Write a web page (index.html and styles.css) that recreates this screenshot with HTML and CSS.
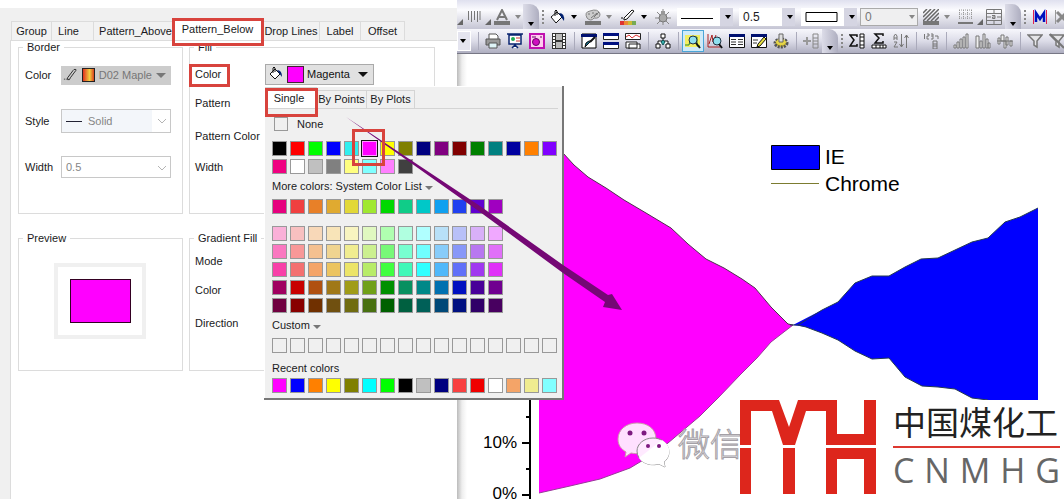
FILE: index.html
```html
<!DOCTYPE html>
<html lang="en">
<head>
<meta charset="utf-8">
<title>Plot Details</title>
<link rel="stylesheet" href="styles.css">
</head>
<body>
<div class="shell">
  <section class="dialog">
    <nav class="tabs">
      <button class="tab tab-group">Group</button>
      <button class="tab tab-line">Line</button>
      <button class="tab tab-above">Pattern_Above</button>
      <button class="tab tab-below active">Pattern_Below</button>
      <button class="tab tab-drop">Drop Lines</button>
      <button class="tab tab-label">Label</button>
      <button class="tab tab-offset">Offset</button>
    </nav>
    <div class="page">
      <fieldset class="group upper">
        <legend>Border</legend>
        <div class="fields">
          <label for="bcolor">Color</label>
          <button id="bcolor" class="color-btn" disabled>
            <svg width="16" height="16" viewBox="0 0 16 16"><path d="M1 12.500h1M3 12.500h1M5 11l6-8M8 11l6-8M11 3l1-1h2v1M5 11v2h2l1-2" fill="none" stroke="#222"/></svg>
            <span class="maple"></span><span>D02 Maple</span><i class="arrow"></i>
          </button>
          <label for="bstyle">Style</label>
          <span class="combo tall">
            <select id="bstyle" disabled><option>Solid</option></select>
            <i class="dash"></i>
            <svg class="chev" width="10" height="6" viewBox="0 0 10 6"><path d="M1 1l4 4 4-4" fill="none" stroke="#b4b4b4"/></svg>
          </span>
          <label for="bwidth">Width</label>
          <span class="combo">
            <select id="bwidth" disabled><option>0.5</option></select>
            <svg class="chev" width="10" height="6" viewBox="0 0 10 6"><path d="M1 1l4 4 4-4" fill="none" stroke="#b4b4b4"/></svg>
          </span>
        </div>
      </fieldset>
      <fieldset class="group upper">
        <legend>Fill</legend>
        <div class="fill-fields">
          <label for="fcolor">Color</label>
          <div class="picker">
            <button id="fcolor" class="fill-btn">
              <svg width="16" height="16" viewBox="0 0 16 16"><path d="M2 8l5-5 5 5-5 5z" fill="#fff" stroke="#111"/><path d="M5 7V2q1-2 2 0v4" fill="none" stroke="#111"/><path d="M9 4q5 0 5 7l-3-4z" fill="#002070"/></svg>
              <span class="chip"></span><span>Magenta</span><i class="arrow"></i>
            </button>
            <div class="popup">
              <div class="ptabs">
                <button class="ptab on">Single</button>
                <button class="ptab points">By Points</button>
                <button class="ptab">By Plots</button>
              </div>
              <div class="pbody">
                <label class="none"><input type="checkbox">None</label>
                <div class="swatches" data-set="basic"></div>
                <button class="heading">More colors: System Color List <i class="arrow small"></i></button>
                <div class="swatches" data-set="system"></div>
                <div class="swatches shades" data-set="shades"></div>
                <button class="heading custom">Custom <i class="arrow small"></i></button>
                <div class="swatches" data-set="custom"></div>
                <p class="recent">Recent colors</p>
                <div class="swatches" data-set="recent"></div>
              </div>
            </div>
          </div>
          <span>Pattern</span>
          <span class="wide">Pattern Color</span>
          <span>Width</span>
        </div>
      </fieldset>
      <fieldset class="group lower">
        <legend>Preview</legend>
        <div class="preview"><div class="sample"></div></div>
      </fieldset>
      <fieldset class="group lower">
        <legend>Gradient Fill</legend>
        <div class="grad-fields"><span>Mode</span><span>Color</span><span>Direction</span></div>
      </fieldset>
    </div>
  </section>

  <main class="workspace">
    <div class="toolbar first">
      <i class="corner"></i>
      <button class="tool" aria-label="Line spacing"><svg viewBox="0 0 16 16"><path d="M2.500 2v9M5.500 2v11M8.500 2v9M11.500 2v11M14 2v9" stroke="#777" fill="none"/></svg></button>
      <i class="corner"></i>
      <button class="tool" aria-label="Font color"><svg viewBox="0 0 16 16"><path d="M3 11L8 1l5 10M5 8h6" stroke="#777" stroke-width="2" fill="none"/><path d="M0 12h16v4H0z" fill="#777"/></svg></button>
      <i class="drop dim"></i><i class="cap"></i><i class="grip"></i>
      <span class="split"><button class="tool" aria-label="Fill color"><svg viewBox="0 0 16 16"><path d="M1 8l6-5 5 5-6 6z" fill="#fff" stroke="#111"/><path d="M5 7V2q1-2 2 0v4" fill="none" stroke="#111"/><path d="M9 4q6 0 5 8l-3-4z" fill="#002070"/></svg></button><i class="drop"></i></span>
      <span class="split"><button class="tool" aria-label="Palette"><svg viewBox="0 0 16 16"><path d="M2 9Q-1 3 5 2q8-3 10 3 0 5-6 4-3 4-7 0z" fill="#ccc" stroke="#888"/><path d="M3 5h2M7 4h2M11 5h2M6 9l6-5M9 8l5-5" stroke="#777"/><path d="M0 12h16v4H0z" fill="#777"/></svg></button><i class="drop dim"></i></span>
      <span class="split"><button class="tool" aria-label="Line color"><svg viewBox="0 0 16 16"><path d="M1 9h2M4 9l8-8 2 1-7 8-3 1z" stroke="#111" fill="#fff"/><path d="M0 12h4v4H0z" fill="#d33"/><path d="M4 12h4v4H4z" fill="#e83"/><path d="M8 12h4v4H8z" fill="#cb3"/><path d="M12 12h4v4h-4z" fill="#7a5"/></svg></button><i class="drop"></i></span>
      <button class="tool" aria-label="Highlight"><svg viewBox="0 0 16 16"><path d="M8 0v16M0 9h16M2 3l12 12M14 3L2 15" stroke="#888"/><circle cx="8" cy="9" r="4" fill="#aaa" stroke="#777"/><path d="M6 2h4v4H6z" fill="#999"/></svg></button>
      <button class="tselect" aria-label="Line style"><svg width="34" height="14"><path d="M0 8.500h32" stroke="#000"/></svg><i class="drop"></i></button>
      <button class="tselect"><span>0.5</span><i class="drop"></i></button>
      <button class="tselect" aria-label="Frame style"><svg width="34" height="14"><path d="M1 2.500h31v9H1z" stroke="#000" fill="#fff"/></svg><i class="drop"></i></button>
      <button class="tselect off" disabled><span>0</span><i class="drop dim"></i></button>
      <span class="split"><button class="tool" aria-label="Hatch"><svg viewBox="0 0 16 16"><path d="M0 4l4-4M0 8l8-8M0 12L12 0M4 12L16 0M8 12l8-8M12 12l4-4" stroke="#666" stroke-width="1.500"/><path d="M0 12h16v4H0z" fill="#777"/></svg></button><i class="drop dim"></i></span>
      <button class="tool" aria-label="Grid"><svg viewBox="0 0 16 16"><path d="M1 1h13M1 5h13M1 9h13M1.500 1v10M5.500 1v10M9.500 1v10M13.500 1v10" stroke="#999" stroke-dasharray="1 1"/><path d="M0 14h15" stroke="#777" stroke-width="2"/></svg></button><i class="corner"></i>
      <button class="tool" aria-label="Merge cells"><svg viewBox="0 0 16 16"><path d="M.5.5h15v15H.5zM0 4.500h16M0 11.500h16M8 0v4M8 12v4M1 8h4M11 8h4M6 6.500h3v3H6.500V8H9" stroke="#777" fill="none"/></svg></button>
      <i class="cap"></i><i class="grip"></i>
      <button class="tool" aria-label="Mask"><svg viewBox="0 0 16 16"><path d="M1.500 1v14M14.500 1v14" stroke="#e02050"/><path d="M4 13V4l4 6 4-6v9" fill="none" stroke="#0010c0" stroke-width="2.500"/></svg></button>
      <button class="tool" aria-label="Unmask"><svg viewBox="0 0 16 16"><path d="M1.500 1v14" stroke="#999"/><path d="M3 3l10 10M13 3L3 13" stroke="#888" stroke-width="3"/></svg></button>
    </div>
    <div class="toolbar second">
      <button class="mini" aria-label="Choose"><i class="drop"></i></button>
      <i class="sep"></i>
      <button class="tool" aria-label="Print"><svg viewBox="0 0 16 16"><path d="M4 7V1h7l2 2v4" fill="#fff" stroke="#555"/><path d="M1 6h14v6H1z" fill="#999" stroke="#555"/><path d="M4 10h8v5H4z" fill="#dff5f8" stroke="#555"/></svg></button>
      <button class="tool" aria-label="Slides"><svg viewBox="0 0 16 16"><path d="M0 1h16M2 2h12v9H2zM8 11v2M5 15l3-3 3 3" fill="#fff" stroke="#0a2470" stroke-width="1.500"/><circle cx="6" cy="6" r="2" fill="#2a5"/><path d="M9 5h4M9 8h4" stroke="#c33"/></svg></button>
      <button class="tool" aria-label="Capture"><svg viewBox="0 0 16 16"><path d="M1 1h14v14H1z" fill="#fce" stroke="#c010b0" stroke-width="2"/><circle cx="7" cy="9" r="3.500" fill="#d010c0" stroke="#606"/><path d="M11 4h2M3 4h4" stroke="#606"/></svg></button>
      <button class="tool" aria-label="Film"><svg viewBox="0 0 16 16"><path d="M1 0h14v16H1z" fill="#333"/><path d="M5 1h6v6H5zM5 9h6v6H5z" fill="#bbb"/><path d="M3 1v14M13 1v14" stroke="#fff" stroke-width="2" stroke-dasharray="2 1"/></svg></button>
      <i class="sep"></i>
      <button class="tool" aria-label="Edit"><svg viewBox="0 0 16 16"><path d="M1 1h14v14H1z" fill="#fff" stroke="#000"/><path d="M0 1h16v3H0z" fill="#001070"/><path d="M14 4L9 9" stroke="#111" stroke-width="2"/><path d="M10 8l-6 6q0-5 4-6z" fill="#176f8a" stroke="#111"/></svg></button>
      <button class="tool" aria-label="Tile"><svg viewBox="0 0 16 16"><path d="M.5.5h15v6H.5zM.5 9.500h15v6H.5z" fill="#fff" stroke="#222"/><path d="M0 0h16v3H0zM0 9h16v3H0z" fill="#001080"/></svg></button>
      <button class="tool" aria-label="Stack"><svg viewBox="0 0 16 16"><path d="M.5.5h15v6H.5zM1 9h11v6H1zM4 11h11v5H4z" fill="#fff" stroke="#222"/><path d="M1 4l3-2 3 3 4-3 4 2" fill="none" stroke="#d33"/></svg></button>
      <i class="sep"></i>
      <button class="tool" aria-label="Hierarchy"><svg viewBox="0 0 16 16"><path d="M6 1h4v4H6zM1 11h4v4H1zM11 11h4v4h-4zM8 5v3M3 11V8h10v3" fill="#fff" stroke="#111"/><path d="M6 9l2-2 2 2-2 3z" fill="#3aa" stroke="#155"/></svg></button>
      <i class="sep"></i>
      <button class="tool chosen" aria-label="Zoom region"><svg viewBox="0 0 16 16"><path d="M0 2h15v12H0z" fill="#f3ee60"/><path d="M0 12h4l2-8h6v9h3" fill="none" stroke="#2a8a30"/><circle cx="8" cy="7" r="4" fill="#8fe0ee" stroke="#234"/><path d="M11 10l4 5" stroke="#111" stroke-width="2"/></svg></button>
      <button class="tool" aria-label="Zoom plot"><svg viewBox="0 0 16 16"><path d="M1 1v13h12M2 11l3-9 1 7 3-7" fill="none" stroke="#a22"/><circle cx="10" cy="8" r="4" fill="#8fe0ee" stroke="#234"/><path d="M12 11l3 4" stroke="#111" stroke-width="2"/></svg></button>
      <button class="tool" aria-label="Table"><svg viewBox="0 0 16 16"><path d="M.5 1.500h15v13H.5z" fill="#fff" stroke="#111"/><path d="M0 1h16v3H0z" fill="#001070"/><path d="M2 6.500h5M9 6.500h5M2 9h5M9 9h5M2 11.500h5M9 11.500h5" stroke="#333"/></svg></button>
      <button class="tool" aria-label="Notes"><svg viewBox="0 0 16 16"><path d="M.5 1.500h15v13H.5z" fill="#fff" stroke="#111"/><path d="M0 1h16v3H0z" fill="#001070"/><path d="M2 7h5M2 10h4" stroke="#333"/><path d="M13 4l2 2-6 7-3 1 1-3z" fill="#e8e040" stroke="#111"/></svg></button>
      <button class="tool" aria-label="Settings"><svg viewBox="0 0 16 16"><ellipse cx="8" cy="10" rx="6" ry="4" fill="#d8c430" stroke="#555" stroke-width="3" stroke-dasharray="2 1"/><ellipse cx="8" cy="9" rx="5" ry="3" fill="#e5d548"/><path d="M6 1h4v8H6z" fill="#ddd" stroke="#666"/></svg></button>
      <i class="sep"></i>
      <button class="tool" aria-label="Add column"><svg viewBox="0 0 16 16"><path d="M0 8h8M4 4v8" stroke="#999" stroke-width="2"/><path d="M10 1h5v14h-5zM10 5h5M10 8h5M10 11h5" fill="none" stroke="#888"/></svg></button>
      <i class="cap"></i><i class="grip"></i>
      <button class="tool" aria-label="Column statistics"><svg viewBox="0 0 16 16"><path d="M8 4V2H1l4 5-4 6h7v-2" fill="none" stroke="#111" stroke-width="1.500"/><path d="M11 1h4v14h-4zM11 4h4M11 8h4M11 12h4" fill="#fff" stroke="#111"/></svg></button>
      <button class="tool" aria-label="Row statistics"><svg viewBox="0 0 16 16"><path d="M12 3V1H4l4 4-4 5h8V8" fill="none" stroke="#111" stroke-width="1.500"/><path d="M1 12h14v3H1zM5 12v3M9 12v3M12 12v3" fill="#fff" stroke="#111"/></svg></button>
      <button class="tool" aria-label="Sort"><svg viewBox="0 0 16 16"><path d="M1 7V3l1.500-2L4 3v4M1 5h3M1 9h3l-3 5h4M8.500 1v13M6.500 11l2 3 2-3M13.500 15V2M11.500 5l2-3 2 3" fill="none" stroke="#777"/></svg></button>
      <i class="sep"></i>
      <button class="tool" aria-label="Row numbers"><svg viewBox="0 0 16 16"><path d="M1.500 1v5M4 1h2v2H4v3h2M8 1h2v5H8M8 3h2M12 3h3v3M10 8h4v8h-4zM10 11h4M10 13h4" fill="none" stroke="#777"/></svg></button>
      <i class="sep"></i>
      <button class="tool" aria-label="Ascending bars"><svg viewBox="0 0 16 16"><path d="M1 12h2v3H1zM4 9h2v6H4zM7 6h2v9H7zM10 4h2v11h-2zM13 1h2v14h-2z" fill="#eee" stroke="#777"/></svg></button>
      <button class="tool" aria-label="Bars"><svg viewBox="0 0 16 16"><path d="M1 3h3v12H1zM5 8h2v7H5zM8 1h2v14H8zM11 6h2v9h-2zM13 10h2v5h-2z" fill="#eee" stroke="#777"/></svg></button>
      <button class="tool" aria-label="Centered bars"><svg viewBox="0 0 16 16"><path d="M0 8h16M1 5h2v6H1zM4 2h3v6H4zM7 8h2v7H7zM9 4h2v8H9zM13 8h2v5h-2z" fill="#eee" stroke="#777"/></svg></button>
      <i class="sep"></i>
      <button class="tool" aria-label="Filter"><svg viewBox="0 0 16 16"><path d="M1 2h14L10 8v6l-3-2V8z" fill="#e5e5e8" stroke="#777" stroke-width="1.500"/></svg></button>
      <button class="tool" aria-label="Clear filter"><svg viewBox="0 0 16 16"><path d="M1 2h14L10 8v6l-3-2V8z" fill="#e5e5e8" stroke="#777" stroke-width="1.500"/><path d="M1 1l14 14" stroke="#777" stroke-width="2"/></svg></button>
    </div>
    <div class="plot">
      <svg class="chart" viewBox="457 54 607 445" preserveAspectRatio="xMinYMin meet" role="img" aria-label="Browser share area chart">
        <path d="M539 130L563 153 574 165 588 177 606 188 624 200 646 213 671 228 688 244 706 259 724 268 742 279 755 288 771 307 788 324 793 325 780 335 771 342 757 358 740 375 718 398 700 416 668 443 650 456 630 468 600 479 570 486 539 493z" fill="#f0f"/>
        <path d="M539 130L563 153 574 165 588 177 606 188 624 200 646 213 671 228 688 244 706 259 724 268 742 279 755 288 771 307 788 324 793 325" fill="none" stroke="#503050"/>
        <path d="M793 325L780 335 771 342 757 358 740 375 718 398 700 416 668 443 650 456 630 468 600 479 570 486 539 493" fill="none" stroke="#99389a"/>
        <path d="M793 325L822 310 838 302 855 283 872 276 889 276 905 267 921 259 938 258 972 242 988 238 1005 222 1020 217 1038 208V400H988L972 398 955 389 938 387 922 386 905 377 889 358 872 359 855 351 838 340 822 333 806 327z" fill="#00f"/>
        <path d="M790 325L798 325 822 310 838 302 855 283 872 276 889 276 905 267 921 259 938 258 972 242 988 238 1005 222 1020 217 1038 208M798 325L806 327 822 333 838 340 855 351 872 359 889 358 905 377 922 386 938 387 955 389 972 398 988 400" fill="none" stroke="#223a50"/>
        <path d="M530 87V499M522 443h8M522 495h8M526 417h4M526 469h4" fill="none" stroke="#000" stroke-width="2"/>
        <text class="tick" x="517" y="448" text-anchor="end">10%</text>
        <text class="tick" x="517" y="499" text-anchor="end">0%</text>
        <path d="M771.500 145.500h48v24h-48z" fill="#00f" stroke="#000"/>
        <path d="M771 183.500h48" stroke="#7c7c30"/>
        <text class="key" x="825" y="164">IE</text>
        <text class="key" x="825" y="191">Chrome</text>
        <path d="M637 423c-11 0-19 7-19 16 0 6 3 10 8 13l-1 5 6-4c13 3 25-4 25-14s-8-16-19-16z" fill="#ffe0ff" stroke="#c9a"/>
        <path d="M653 438c-9 0-16 6-16 13 0 10 11 16 22 13l6 3-1-5c10-8 4-24-11-24z" fill="#ffeaff" stroke="#888"/>
        <path d="M662 440c10 6 9 16 2 22l1 5-6-3c-8 2-16 0-20-6z" fill="#fff"/>
        <g fill="#7d1a80"><circle cx="630" cy="433" r="2.500"/><circle cx="644" cy="433" r="2.500"/><circle cx="648" cy="446" r="2"/><circle cx="659" cy="446" r="2"/></g>
        <text class="wechat" x="678" y="456">微信</text>
      </svg>
      <div class="brand">
        <svg width="136" height="94" viewBox="0 0 136 94" fill="#dd261c"><path d="M0 0H39L49 27 58 0H97V34H124V0H136V45H86V11H66L55 45H43L32 11H11V45H0zM0 48H11V94H0zM43 48H55V94H43zM86 48H136V94H124V59H97V94H86z"/></svg>
        <div class="words">
          <div class="cn" lang="zh">中国煤化工</div>
          <div class="en"><span>C</span><span>N</span><span>M</span><span>H</span><span>G</span></div>
        </div>
      </div>
    </div>
  </main>
  <svg class="marks" width="640" height="330" viewBox="0 0 640 330" aria-hidden="true">
    <path d="M346 117L480 206 563 265 608 295 612 294 622 310 603 307 605 302 563 273 480 212z" fill="#750875"/>
    <g fill="none" stroke="#d8433d" stroke-width="3"><path d="M173.500 19.500h89v25h-89zM190.500 65.500h38v20h-38zM266.500 89.500h50v26h-50zM353.500 130.500h30v34h-30z"/></g>
  </svg>
</div>
<script src="app.js"></script>
</body>
</html>
```
FILE: styles.css
```css
* { box-sizing: border-box; }
body { margin: 0; background: #fff; color: #1a1a22; font: 11px/14px "Liberation Sans", Arial, sans-serif; }
button, select, input { font: inherit; color: inherit; margin: 0; }
button { border: 0; padding: 0; background: none; white-space: nowrap; }
.shell { position: relative; display: grid; grid-template-columns: 457px minmax(0, 1fr); min-height: 100vh; overflow: hidden; }
.marks { position: absolute; left: 0; top: 0; z-index: 5; pointer-events: none; }

.dialog { display: flex; flex-direction: column; border-top: 8px solid #fff; background: #f0f0f0; }
.tabs { display: flex; align-items: flex-end; height: 32px; padding-left: 11px; }
.tab { height: 19px; border: solid #dcdcdc; border-width: 1px 1px 0 0; background: #f2f2f2; }
.tab-group { width: 41px; border-left-width: 1px; }
.tab-line { width: 42px; padding-right: 8px; }
.tab-above { width: 79px; padding-left: 5px; }
.tab-below { width: 90px; height: 22px; padding-bottom: 2px; background: #fff; }
.tab-drop { width: 57px; }
.tab-label { width: 41px; }
.tab-offset { width: 44px; }
.page { flex: 1; display: grid; grid-template-columns: 165px 246px; gap: 18px 6px; align-content: start; margin-left: 10px; padding-left: 7px; border: solid #dcdcdc; border-width: 1px 0 0 1px; background: #fff; }
.group { min-width: 0; margin: 0; padding: 0; border: 1px solid #dcdcdc; }
.group legend { margin-left: 4px; padding: 0 4px; line-height: 13px; }
.upper { height: 173px; }
.lower { height: 139px; }
.fields { display: grid; grid-template-columns: 36px 110px; grid-template-rows: repeat(3, 46px); align-items: center; padding: 0 0 0 6px; margin-top: -2px; }
.color-btn, .fill-btn { display: flex; align-items: center; gap: 4px; height: 19px; padding: 0 5px 0 2px; }
.color-btn { background: #ccc; color: #777; }
.maple { width: 14px; height: 14px; border: 1px solid #222; background: linear-gradient(90deg, #e03020, #f2d040 60%, #d84020); }
.arrow { display: inline-block; border: solid transparent; border-width: 5px 5px 0; border-top-color: currentColor; margin-left: auto; }
.arrow.small { border-width: 4px 4px 0; border-top-color: #777; margin-left: 0; }
.combo { position: relative; display: flex; height: 22px; }
.combo.tall { height: 24px; }
.combo select { width: 100%; padding: 0 4px; border: 1px solid #c8c8c8; border-radius: 0; background: #fff; color: #858585; opacity: 1; appearance: none; }
.combo.tall select { padding-left: 26px; background: linear-gradient(90deg, #f3f6fa 90px, #fff 90px); }
.dash { position: absolute; left: 5px; top: 12px; width: 16px; height: 1px; background: #223; }
.chev { position: absolute; right: 4px; top: 9px; }
.fill-fields { display: grid; grid-template-columns: 70px 110px; grid-template-rows: 26px 32px 34px 28px; align-items: center; margin-top: 7px; padding-left: 5px; }
.fill-fields > span { grid-column: 1; }
.wide { white-space: nowrap; }
.picker { position: relative; }
.fill-btn { width: 109px; height: 21px; border: 1px solid #aaa; background: #e1e1e1; gap: 3px; color: #111; }
.chip { width: 17px; height: 17px; border: 1px solid #423; background: #f0f; }
.preview { width: 92px; margin: 18px 0 0 35px; padding: 12px 11px 12px 12px; border: 4px solid #f0f0f0; }
.sample { height: 44px; border: 1px solid #302; background: #f0f; }
.grad-fields { display: grid; grid-template-rows: 28px 30px 36px; align-items: center; padding: 2px 0 0 5px; }

.popup { position: absolute; left: -1px; top: 22px; z-index: 3; width: 300px; padding-bottom: 5px; border: solid #777; border-width: 0 2px 2px 0; background: #f0f0f0; box-shadow: inset 1px 1px #fff; }
.ptabs { display: flex; align-items: flex-end; height: 23px; margin: 0 4px 0 1px; border-bottom: 1px solid #d4d4d4; }
.ptab { height: 18px; width: 48px; border: solid #d4d4d4; border-width: 1px 1px 0 0; }
.ptab.on { width: 52px; height: 21px; background: #fff; padding-right: 3px; }
.ptab.points { width: 50px; }
.pbody { padding: 7px 0 0 8px; }
.none { display: flex; align-items: center; gap: 9px; height: 17px; padding-left: 2px; margin-bottom: 8px; }
.none input { width: 14px; height: 14px; border: 1px solid #999; appearance: none; }
.swatches { display: grid; grid-template-columns: repeat(16, 15px); gap: 3px; }
.shades { margin-top: 12px; }
.sw { height: 15px; border: 1px solid #999; }
.sw.picked { border-color: #f9f; outline: 1px solid #111; }
.heading { display: block; height: 14px; margin: 5px 0 6px; }
.recent { margin: 8px 0 3px; }

.workspace { min-width: 0; overflow: hidden; }
.toolbar { display: flex; align-items: center; overflow: hidden; }
.toolbar > *, .split > * { flex: none; }
.first { height: 29px; padding-top: 4px; background: linear-gradient(#dfe0ef, #fbfbfe 35%, #c5c5d4); }
.second { height: 25px; background: linear-gradient(#f7f7fc, #dcdce8 50%, #aeaec0); border-bottom: 1px solid #777785; }
.tool { display: grid; place-items: center; width: 22px; height: 22px; }
.tool svg { width: 16px; height: 16px; }
.chosen { border: 1px solid #4aa5d8; background: #cfeaf8; }
.split { display: flex; align-items: center; margin-right: 3px; }
.drop { display: block; width: 6px; margin: 0 2px; border: solid transparent; border-width: 4px 3px 0; border-top-color: #000; }
.drop.dim { border-top-color: #888; }
.corner { width: 6px; height: 6px; border: solid transparent; border-width: 3px; border-right-color: #666; border-bottom-color: #666; align-self: flex-end; margin-bottom: 4px; }
.cap { display: flex; width: 16px; height: 100%; background: linear-gradient(90deg, #dcdce8, #aeaec0); border-radius: 0 9px 0 0; }
.cap::after { content: ""; margin: auto 5px 3px; border: solid transparent; border-width: 4px 3px 0; border-top-color: #000; }
.grip { width: 8px; height: 16px; background: radial-gradient(circle, #888 1px, transparent 1px) 0 0 / 8px 4px; }
.mini { width: 14px; height: 20px; margin-right: 3px; border: 1px solid #fff; background: #e4e4ef; }
.sep { width: 8px; height: 18px; background: linear-gradient(#aaaabb, #aaaabb) center / 1px 100% no-repeat; }
.tselect { display: flex; align-items: center; justify-content: space-between; width: 56px; height: 18px; margin: 0 3px; padding-left: 4px; background: linear-gradient(90deg, #fff 43px, #d5d5e2 43px); font-size: 12px; }
.tselect.off { width: 58px; margin: 0 2px 0 0; border: 1px solid #aaa; background: #efeff0; color: #777; }

.plot { position: relative; background: linear-gradient(90deg, #bbb, #eee 5px, #fff 10px); }
.chart { display: block; width: 100%; }
.chart text { font-family: "Liberation Sans", Arial, sans-serif; fill: #000; }
.chart .tick { font-size: 17px; }
.chart .key { font-size: 21px; }
.chart .wechat { font: 300 32px "Noto Sans CJK SC", sans-serif; fill: #fff; stroke: #a4a0a6; stroke-width: 1px; }
.brand { position: absolute; right: 0; bottom: 0; display: flex; gap: 17px; width: 324px; height: 99px; background: #fff; }
.words { width: 167px; }
.cn { height: 48px; border-bottom: 2px solid #dd3830; font: 400 33px/42px "Noto Sans CJK SC", sans-serif; color: #222; white-space: nowrap; }
.en { display: flex; justify-content: space-between; font: 34px/44px "Open Sans", sans-serif; color: #666; }
```
FILE: app.js
```js
const palettes = {
  basic: "#000000 #ff0000 #00ff00 #0000ff #30eeee #ff00ff #ffff00 #808000 #000080 #800080 #800000 #008000 #008080 #0000a0 #ff8000 #8000ff #f00080 #ffffff #c0c0c0 #808080 #ffff80 #80ffff #ff80ff #404040",
  system: "#e6007e #f04040 #e88028 #e0aa30 #e2d838 #a0e830 #00d800 #10cc88 #00c8c8 #10a0f0 #2040f0 #6000d0 #a000c0",
  shades: "#fab0d8 #f8c0c0 #f8d8b8 #f8e4b8 #f8f4c0 #e0f8c0 #b0ffb0 #b0ffe0 #b0ffff #b8e0f8 #b8c0f8 #d8b0f8 #f0a8ff #fa78c0 #f89898 #f4c090 #f0d490 #f0ec90 #ccf090 #78f878 #78ffd0 #70ffff #88ccfa #8898f8 #b878f0 #e070f8 #f840a8 #f47070 #f4a468 #ecc460 #ece468 #b8ec68 #40ff40 #40f8b8 #30ffff #50b8fa #6070f8 #a038f0 #e030f8 #a00060 #c80000 #b05010 #a07818 #a09c18 #70a018 #009000 #089060 #008888 #0070b0 #0010c0 #480098 #700090 #700040 #880000 #703000 #705010 #706c10 #487010 #006000 #006040 #006058 #004878 #001080 #300068 #480060",
  custom: Array(16).fill("#f0f0f0").join(" "),
  recent: "#ff00ff #0000ff #ff8000 #ffff00 #808000 #00ffff #00ff00 #000000 #c0c0c0 #000080 #f84040 #f00000 #ffffff #f4a468 #f0ec90 #80ffff"
};

document.querySelectorAll(".swatches").forEach((grid) => {
  const name = grid.dataset.set;
  palettes[name].split(" ").forEach((color, i) => {
    const b = document.createElement("button");
    b.className = "sw";
    b.style.backgroundColor = color;
    b.setAttribute("aria-label", color);
    if (name === "basic" && i === 5) b.classList.add("picked");
    // System shades come in rows of thirteen
    if (name === "shades" && i % 13 === 0) b.style.gridColumnStart = 1;
    grid.append(b);
  });
});
```
